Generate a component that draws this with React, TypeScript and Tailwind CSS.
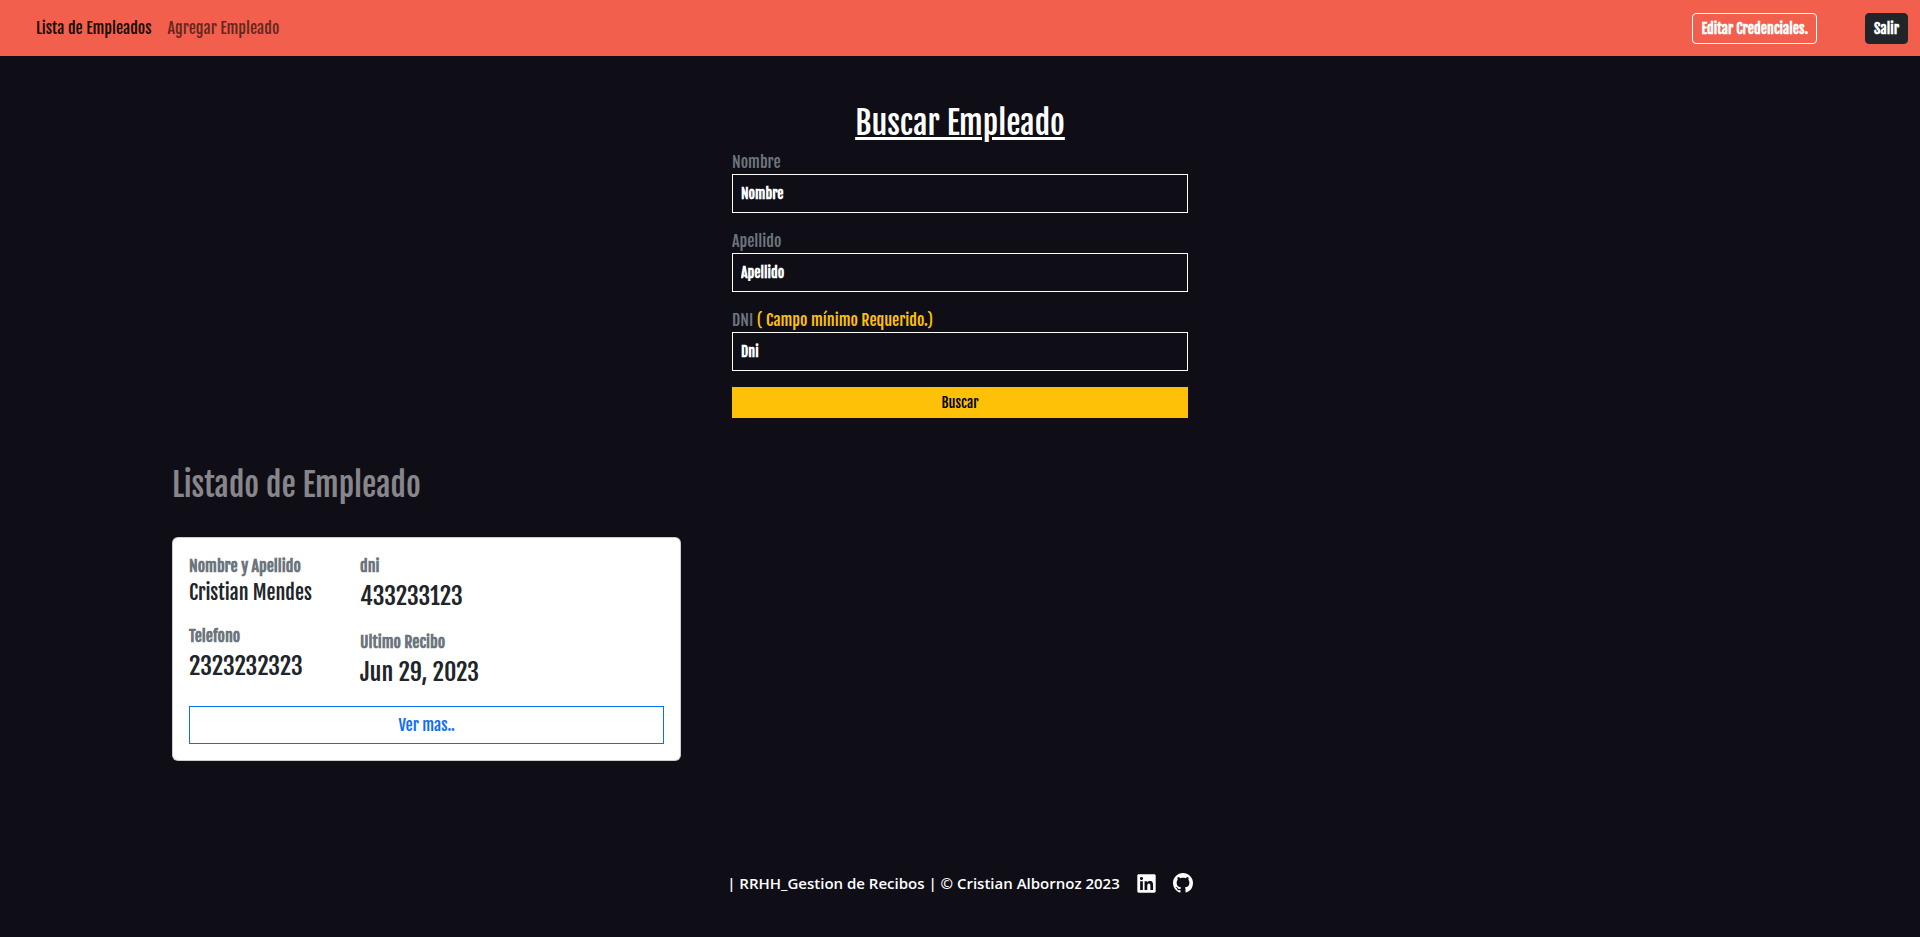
import type { ReactNode } from "react";
import { FaLinkedin } from "react-icons/fa";
import { BsGithub } from "react-icons/bs";

type FieldProps = { id: string; label: string; placeholder: string; note?: string };

function Field({ id, label, placeholder, note }: FieldProps) {
  return (
    <div className="mb-4">
      <label htmlFor={id} className="block text-[#6c757d]">
        {label}
        {note && <span className="text-[#ffc107]"> {note}</span>}
      </label>
      <input
        id={id}
        type="text"
        placeholder={placeholder}
        className="block h-[39px] w-full border border-white bg-transparent px-2 text-sm font-bold text-white placeholder:text-white placeholder:opacity-100"
      />
    </div>
  );
}

function Detail({ label, children }: { label: string; children: ReactNode }) {
  return (
    <div className="mb-4">
      <dt className="font-bold text-[#6c757d]">{label}</dt>
      <dd className="text-[#212529]">{children}</dd>
    </div>
  );
}

export default function App() {
  return (
    <div className="flex min-h-screen flex-col bg-[#0f0d16] font-['Fjalla_One','Open_Sans_Condensed','Roboto_Condensed',sans-serif] text-base leading-6">
      <header className="flex h-14 items-center justify-between bg-[#f2604d] pr-3 pl-9">
        <nav className="flex gap-4">
          <a href="#lista" className="text-black/90">Lista de Empleados</a>
          <a href="#agregar" className="text-black/60">Agregar Empleado</a>
        </nav>
        <div className="flex gap-12 text-sm leading-[21px] font-bold text-white">
          <button type="button" className="rounded border border-white px-2 py-1">
            Editar Credenciales.
          </button>
          <button type="button" className="rounded border border-[#212529] bg-[#212529] px-2 py-1">
            Salir
          </button>
        </div>
      </header>

      <main className="flex flex-col">
        <form className="mx-auto mt-12 w-full max-w-[456px]">
          <h2 className="mb-2 text-center text-[32px] leading-[38px] font-medium text-white underline">
            Buscar Empleado
          </h2>
          <Field id="nombre" label="Nombre" placeholder="Nombre" />
          <Field id="apellido" label="Apellido" placeholder="Apellido" />
          <Field id="dni" label="DNI" placeholder="Dni" note="( Campo mínimo Requerido.)" />
          <button
            type="button"
            className="w-full border border-[#ffc107] bg-[#ffc107] py-1 text-sm leading-[21px] text-black"
          >
            Buscar
          </button>
        </form>

        <section className="mx-auto mt-12 w-full max-w-[1576px]">
          <h2 className="text-[32px] leading-[39px] font-medium text-white/50">Listado de Empleado</h2>
          <div className="mt-8 grid grid-cols-3 gap-6">
            <article className="rounded-md border border-black/20 bg-white p-4">
              <dl className="flex">
                <div className="w-[171px]">
                  <Detail label="Nombre y Apellido">
                    <span className="block text-xl leading-[30px]">Cristian Mendes</span>
                  </Detail>
                  <Detail label="Telefono">
                    <span className="block text-2xl leading-9">2323232323</span>
                  </Detail>
                </div>
                <div>
                  <Detail label="dni">
                    <span className="block text-2xl leading-9">433233123</span>
                  </Detail>
                  <Detail label="Ultimo Recibo">
                    <span className="block text-2xl leading-9">Jun 29, 2023</span>
                  </Detail>
                </div>
              </dl>
              <button type="button" className="w-full border border-[#0d6efd] py-[6px] text-[#0d6efd]">
                Ver mas..
              </button>
            </article>
          </div>
        </section>
      </main>

      <footer className="mt-auto flex items-center justify-center gap-4 pb-[42px] font-['Open_Sans','Noto_Sans',sans-serif] text-[15px] font-semibold text-white">
        <p>| RRHH_Gestion de Recibos | © Cristian Albornoz 2023</p>
        <a href="#linkedin" aria-label="LinkedIn">
          <FaLinkedin size={21} />
        </a>
        <a href="#github" aria-label="GitHub">
          <BsGithub size={20} />
        </a>
      </footer>
    </div>
  );
}
